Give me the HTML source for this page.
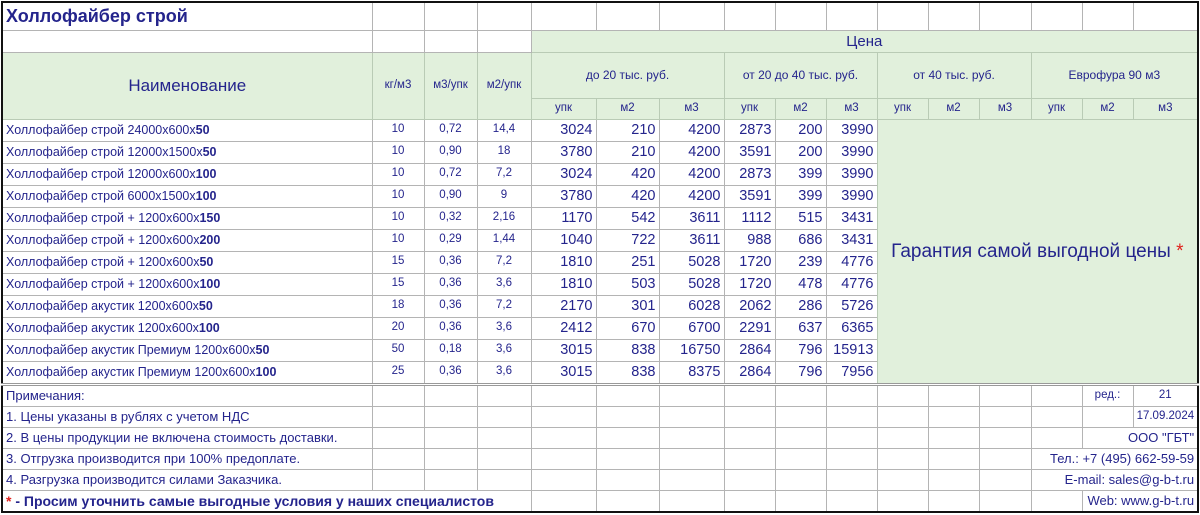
<!DOCTYPE html>
<html><head><meta charset="utf-8"><style>
html,body{margin:0;padding:0;background:#fff;}
body{width:1200px;height:515px;overflow:hidden;}
table{position:absolute;left:1px;top:1px;border-collapse:collapse;table-layout:fixed;border:2px solid #111;font-family:"Liberation Sans",sans-serif;color:#24248c;}
td{border:1px solid #b4b4b4;padding:0 3px;white-space:nowrap;overflow:visible;font-size:12.5px;line-height:1;vertical-align:middle;}
.g{background:#e1f0dc;border-color:#b9cbb5;}
.c{text-align:center;}
.r{text-align:right;font-size:14.5px;}
.s{font-size:11.5px;text-align:center;}
.sm{font-size:11.5px;}
.h{font-size:12px;text-align:center;}
b{font-weight:bold;}
.d td{height:21px;}
.n td{height:20px;font-size:13px;}
.n td.sm{font-size:11.5px;}
.last td{border-bottom:3px double #999;}
</style></head><body>
<table>
<colgroup><col style="width:370px"><col style="width:52px"><col style="width:53px"><col style="width:54px"><col style="width:65px"><col style="width:63px"><col style="width:65px"><col style="width:51px"><col style="width:51px"><col style="width:51px"><col style="width:51px"><col style="width:51px"><col style="width:52px"><col style="width:51px"><col style="width:51px"><col style="width:63px"></colgroup>
<tr style="height:28px"><td style="font-size:18px;font-weight:bold;">Холлофайбер строй</td><td></td><td></td><td></td><td></td><td></td><td></td><td></td><td></td><td></td><td></td><td></td><td></td><td></td><td></td><td></td></tr>
<tr style="height:22px"><td></td><td></td><td></td><td></td><td class="g c" colspan="12" style="font-size:15px">Цена</td></tr>
<tr style="height:46px"><td class="g c" rowspan="2" style="font-size:17px">Наименование</td><td class="g s" rowspan="2">кг/м3</td><td class="g s" rowspan="2">м3/упк</td><td class="g s" rowspan="2">м2/упк</td><td class="g h" colspan="3">до 20 тыс. руб.</td><td class="g h" colspan="3">от 20 до 40 тыс. руб.</td><td class="g h" colspan="3">от 40 тыс. руб.</td><td class="g h" colspan="3">Еврофура 90 м3</td></tr>
<tr style="height:21px"><td class="g s">упк</td><td class="g s">м2</td><td class="g s">м3</td><td class="g s">упк</td><td class="g s">м2</td><td class="g s">м3</td><td class="g s">упк</td><td class="g s">м2</td><td class="g s">м3</td><td class="g s">упк</td><td class="g s">м2</td><td class="g s">м3</td></tr>
<tr class="d"><td>Холлофайбер строй 24000x600x<b>50</b></td><td class="s">10</td><td class="s">0,72</td><td class="s">14,4</td><td class="r">3024</td><td class="r">210</td><td class="r">4200</td><td class="r">2873</td><td class="r">200</td><td class="r">3990</td><td class="g c" colspan="6" rowspan="12" style="font-size:19px;white-space:nowrap;border-bottom:3px double #999">Гарантия самой выгодной цены <span style="color:#e0201c">*</span></td></tr>
<tr class="d"><td>Холлофайбер строй 12000x1500x<b>50</b></td><td class="s">10</td><td class="s">0,90</td><td class="s">18</td><td class="r">3780</td><td class="r">210</td><td class="r">4200</td><td class="r">3591</td><td class="r">200</td><td class="r">3990</td></tr>
<tr class="d"><td>Холлофайбер строй 12000x600x<b>100</b></td><td class="s">10</td><td class="s">0,72</td><td class="s">7,2</td><td class="r">3024</td><td class="r">420</td><td class="r">4200</td><td class="r">2873</td><td class="r">399</td><td class="r">3990</td></tr>
<tr class="d"><td>Холлофайбер строй 6000x1500x<b>100</b></td><td class="s">10</td><td class="s">0,90</td><td class="s">9</td><td class="r">3780</td><td class="r">420</td><td class="r">4200</td><td class="r">3591</td><td class="r">399</td><td class="r">3990</td></tr>
<tr class="d"><td>Холлофайбер строй + 1200x600x<b>150</b></td><td class="s">10</td><td class="s">0,32</td><td class="s">2,16</td><td class="r">1170</td><td class="r">542</td><td class="r">3611</td><td class="r">1112</td><td class="r">515</td><td class="r">3431</td></tr>
<tr class="d"><td>Холлофайбер строй + 1200x600x<b>200</b></td><td class="s">10</td><td class="s">0,29</td><td class="s">1,44</td><td class="r">1040</td><td class="r">722</td><td class="r">3611</td><td class="r">988</td><td class="r">686</td><td class="r">3431</td></tr>
<tr class="d"><td>Холлофайбер строй + 1200x600x<b>50</b></td><td class="s">15</td><td class="s">0,36</td><td class="s">7,2</td><td class="r">1810</td><td class="r">251</td><td class="r">5028</td><td class="r">1720</td><td class="r">239</td><td class="r">4776</td></tr>
<tr class="d"><td>Холлофайбер строй + 1200x600x<b>100</b></td><td class="s">15</td><td class="s">0,36</td><td class="s">3,6</td><td class="r">1810</td><td class="r">503</td><td class="r">5028</td><td class="r">1720</td><td class="r">478</td><td class="r">4776</td></tr>
<tr class="d"><td>Холлофайбер акустик 1200x600x<b>50</b></td><td class="s">18</td><td class="s">0,36</td><td class="s">7,2</td><td class="r">2170</td><td class="r">301</td><td class="r">6028</td><td class="r">2062</td><td class="r">286</td><td class="r">5726</td></tr>
<tr class="d"><td>Холлофайбер акустик 1200x600x<b>100</b></td><td class="s">20</td><td class="s">0,36</td><td class="s">3,6</td><td class="r">2412</td><td class="r">670</td><td class="r">6700</td><td class="r">2291</td><td class="r">637</td><td class="r">6365</td></tr>
<tr class="d"><td>Холлофайбер акустик Премиум 1200x600x<b>50</b></td><td class="s">50</td><td class="s">0,18</td><td class="s">3,6</td><td class="r">3015</td><td class="r">838</td><td class="r">16750</td><td class="r">2864</td><td class="r">796</td><td class="r">15913</td></tr>
<tr class="d last"><td>Холлофайбер акустик Премиум 1200x600x<b>100</b></td><td class="s">25</td><td class="s">0,36</td><td class="s">3,6</td><td class="r">3015</td><td class="r">838</td><td class="r">8375</td><td class="r">2864</td><td class="r">796</td><td class="r">7956</td></tr>
<tr class="n"><td>Примечания:</td><td></td><td></td><td></td><td></td><td></td><td></td><td></td><td></td><td></td><td></td><td></td><td></td><td></td><td class="sm c">ред.:</td><td class="sm c">21</td></tr>
<tr class="n"><td>1. Цены указаны в рублях с учетом НДС</td><td></td><td></td><td></td><td></td><td></td><td></td><td></td><td></td><td></td><td></td><td></td><td></td><td></td><td></td><td class="sm" style="text-align:right">17.09.2024</td></tr>
<tr class="n"><td>2. В цены продукции не включена стоимость доставки.</td><td></td><td></td><td></td><td></td><td></td><td></td><td></td><td></td><td></td><td></td><td></td><td></td><td></td><td colspan="2" style="text-align:right">ООО "ГБТ"</td></tr>
<tr class="n"><td>3. Отгрузка производится при 100% предоплате.</td><td></td><td></td><td></td><td></td><td></td><td></td><td></td><td></td><td></td><td></td><td></td><td></td><td colspan="3" style="text-align:right">Тел.: +7 (495) 662-59-59</td></tr>
<tr class="n"><td>4. Разгрузка производится силами Заказчика.</td><td></td><td></td><td></td><td></td><td></td><td></td><td></td><td></td><td></td><td></td><td></td><td></td><td colspan="3" style="text-align:right">E-mail: sales@g-b-t.ru</td></tr>
<tr class="n"><td colspan="4" style="font-weight:bold;font-size:14px"><span style="color:#e0201c">*</span> - Просим уточнить самые выгодные условия у наших специалистов</td><td></td><td></td><td></td><td></td><td></td><td></td><td></td><td></td><td></td><td></td><td colspan="2" style="text-align:right">Web: www.g-b-t.ru</td></tr>
</table>
</body></html>
